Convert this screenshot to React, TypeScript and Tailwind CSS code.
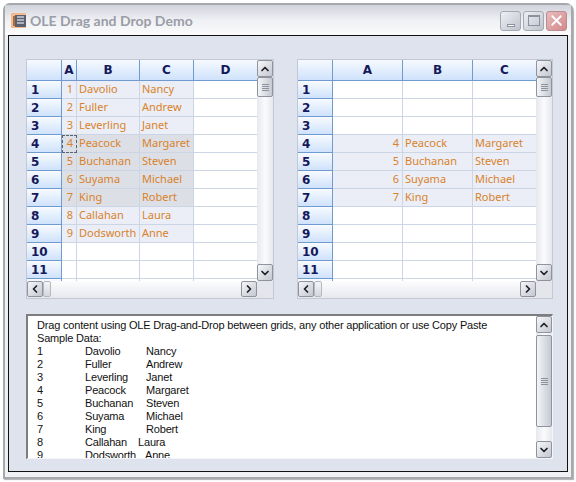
import { ChevronDown, ChevronLeft, ChevronRight, ChevronUp, X } from 'lucide-react'
import type { ReactNode } from 'react'

type Cell = { text?: string; right?: boolean; tone?: 'light' | 'dark'; focus?: boolean }

const people = [
  ['Davolio', 'Nancy'],
  ['Fuller', 'Andrew'],
  ['Leverling', 'Janet'],
  ['Peacock', 'Margaret'],
  ['Buchanan', 'Steven'],
  ['Suyama', 'Michael'],
  ['King', 'Robert'],
  ['Callahan', 'Laura'],
  ['Dodsworth', 'Anne'],
]

// x of the third text column differs on the two rows where the text is not tab aligned
const textWidths = [61, 61, 61, 61, 61, 61, 61, 53, 60]

function ScrollButton({ children, className = '' }: { children: ReactNode; className?: string }) {
  return (
    <div
      className={`flex shrink-0 items-center justify-center rounded-[2px] border border-[#8e939e] bg-gradient-to-br from-[#f6f7f9] to-[#c4c7d0] text-[#1f2128] ${className}`}
    >
      {children}
    </div>
  )
}

function GripLines() {
  return (
    <div className="flex flex-col gap-[1px]">
      <div className="h-px w-[7px] bg-[#8c919c]" />
      <div className="h-px w-[7px] bg-[#8c919c]" />
      <div className="h-px w-[7px] bg-[#8c919c]" />
      <div className="h-px w-[7px] bg-[#8c919c]" />
    </div>
  )
}

function VerticalBar() {
  return (
    <div className="flex h-full w-4 shrink-0 flex-col bg-gradient-to-r from-[#e6e8ee] via-[#fbfbfd] to-[#e6e8ee]">
      <ScrollButton className="h-[17px] w-4">
        <ChevronUp size={12} strokeWidth={3.5} />
      </ScrollButton>
      <div className="flex h-[20px] w-4 items-center justify-center rounded-[2px] border border-[#8e939e] bg-gradient-to-r from-[#f4f5f8] to-[#c6c9d2]">
        <GripLines />
      </div>
      <div className="grow" />
      <ScrollButton className="h-[17px] w-4">
        <ChevronDown size={12} strokeWidth={3.5} />
      </ScrollButton>
    </div>
  )
}

function HorizontalBar({ width }: { width: number }) {
  return (
    <div className="flex h-[17px] bg-gradient-to-b from-[#fdfdfe] to-[#e6e8ee]">
      <div className="flex" style={{ width }}>
        <ScrollButton className="h-[16px] w-4">
          <ChevronLeft size={12} strokeWidth={3.5} />
        </ScrollButton>
        <div className="h-[16px] w-[8px] rounded-[2px] border border-[#b4b8c2] bg-gradient-to-b from-[#f4f5f8] to-[#d4d7de]" />
        <div className="grow" />
        <ScrollButton className="h-[16px] w-4">
          <ChevronRight size={12} strokeWidth={3.5} />
        </ScrollButton>
      </div>
      <div className="grow bg-[#e4e6ec]" />
    </div>
  )
}

function DataGrid({ cols, rows, width }: { cols: { name: string; w: number }[]; rows: Cell[][]; width: number }) {
  const tableWidth = 35 + cols.reduce((sum, c) => sum + c.w, 0)
  return (
    <div className="flex h-[240px] flex-col border border-[#c4c8d2] bg-white" style={{ width }}>
      <div className="flex h-[221px]">
        <div className="h-full overflow-hidden" style={{ width: tableWidth }}>
          <div className="flex h-[21px] border-b border-[#6f9bd1]">
            <div className="w-[35px] border-r border-[#6f9bd1] bg-gradient-to-b from-[#f6faff] to-[#cfe2fb]" />
            {cols.map((c) => (
              <div
                key={c.name}
                className="flex items-center justify-center border-r border-[#6f9bd1] bg-gradient-to-b from-[#f6faff] to-[#cfe2fb] text-[12px] font-bold text-[#15185a] font-['DejaVu_Sans',sans-serif] last:border-r-0"
                style={{ width: c.w }}
              >
                {c.name}
              </div>
            ))}
          </div>
          {rows.map((row, i) => (
            <div key={i} className="flex h-[18px]">
              <div className="flex w-[35px] items-center border-r border-b border-[#6f9bd1] bg-gradient-to-b from-[#f8fbff] to-[#cfe2fb] pl-[4px] text-[12px] font-bold text-[#15185a] font-['DejaVu_Sans',sans-serif]">
                {i < 11 ? i + 1 : ''}
              </div>
              {row.map((cell, j) => (
                <div
                  key={j}
                  className={`flex items-center overflow-hidden whitespace-nowrap border-r border-b border-[#ccd5e4] text-[11px] text-[#d9822b] font-['Noto_Sans',sans-serif] last:border-r-0 ${
                    cell.tone === 'dark' ? 'bg-[#dcdfe6]' : cell.tone === 'light' ? 'bg-[#ebeef6]' : 'bg-white'
                  } ${cell.right ? 'justify-end pr-[3px]' : 'pl-[2px]'} ${
                    cell.focus ? 'outline-1 -outline-offset-1 outline-dashed outline-[#5b6270]' : ''
                  }`}
                  style={{ width: cols[j].w }}
                >
                  {cell.text}
                </div>
              ))}
            </div>
          ))}
        </div>
        <VerticalBar />
      </div>
      <HorizontalBar width={tableWidth} />
    </div>
  )
}

function WindowButton({ children, className }: { children: ReactNode; className: string }) {
  return (
    <div className={`flex h-[20px] w-[21px] items-center justify-center rounded-[3px] border ${className}`}>{children}</div>
  )
}

function TitleIcon() {
  return (
    <svg width="15" height="15" viewBox="0 0 15 15" className="shrink-0">
      <rect width="15" height="15" fill="#f6b98a" />
      <rect x="4" y="2" width="11" height="12" fill="#5a6170" />
      <path d="M6 4h7M6 7h7M6 10h7" stroke="#c9cdd6" strokeWidth="1.4" />
      <rect x="2" y="3" width="2" height="10" fill="#a8703f" />
    </svg>
  )
}

export default function App() {
  const leftRows: Cell[][] = Array.from({ length: 12 }, (_, i) => {
    const p = people[i]
    if (!p) return [{}, {}, {}, {}]
    const tone = i >= 3 && i <= 6 ? 'dark' : 'light'
    return [
      { text: String(i + 1), right: true, tone, focus: i === 3 },
      { text: p[0], tone },
      { text: p[1], tone },
      {},
    ]
  })
  const rightRows: Cell[][] = Array.from({ length: 12 }, (_, i) => {
    if (i < 3 || i > 6) return [{}, {}, {}]
    return [
      { text: String(i + 1), right: true, tone: 'light' },
      { text: people[i][0], tone: 'light' },
      { text: people[i][1], tone: 'light' },
    ]
  })

  return (
    <div className="h-[482px] w-[576px] bg-white pt-[3px] pl-[3px]">
      <div className="flex h-[476px] w-[570px] flex-col rounded-t-[7px] border-2 border-[#a6a8ad] bg-[#eef0f4] shadow-[1px_1px_1px_#b0b0b0]">
        <div className="flex h-[30px] items-center bg-gradient-to-b from-[#d0d3da] via-[#eff0f4] to-[#fbfbfc] pl-[6px] pr-[4px] pt-[1px]">
          <TitleIcon />
          <div className="ml-[4px] grow text-[14px] font-bold text-[#999da7] font-['Lato',sans-serif]">
            OLE Drag and Drop Demo
          </div>
          <div className="flex gap-[2px]">
            <WindowButton className="items-end border-[#a5a9b4] bg-gradient-to-br from-[#eef0f4] to-[#bfc3cd] pb-[3px]">
              <div className="h-[3px] w-[8px] border border-[#8c919c] bg-white" />
            </WindowButton>
            <WindowButton className="border-[#a5a9b4] bg-gradient-to-br from-[#eef0f4] to-[#bfc3cd]">
              <div className="h-[11px] w-[12px] border border-t-2 border-[#8c919c]" />
            </WindowButton>
            <WindowButton className="border-[#b78c92] bg-gradient-to-br from-[#e8bcbc] to-[#d38a8c] text-white">
              <X size={17} strokeWidth={2.5} />
            </WindowButton>
          </div>
        </div>
        <div className="mx-[3px] h-[437px] border border-[#111] bg-[#dfe3ee] pt-[23px] pl-[17px]">
          <div className="flex gap-[23px]">
            <DataGrid
              width={248}
              cols={[
                { name: 'A', w: 15 },
                { name: 'B', w: 63 },
                { name: 'C', w: 54 },
                { name: 'D', w: 63 },
              ]}
              rows={leftRows}
            />
            <DataGrid
              width={256}
              cols={[
                { name: 'A', w: 70 },
                { name: 'B', w: 70 },
                { name: 'C', w: 63 },
              ]}
              rows={rightRows}
            />
          </div>
          <div className="mt-[15px] flex h-[145px] w-[527px] border-t-2 border-l-2 border-b border-r border-t-[#7d7d7d] border-l-[#7d7d7d] border-b-[#f4f5f8] border-r-[#f4f5f8] bg-white">
            <div className="h-full grow overflow-hidden pl-[9px] pt-[3px] text-[11px] leading-[13px] tracking-[-0.18px] text-[#111] font-['Liberation_Sans',sans-serif]">
              <div className="whitespace-nowrap">Drag content using OLE Drag-and-Drop between grids, any other application or use Copy Paste</div>
              <div>Sample Data:</div>
              {people.map((p, i) => (
                <div key={p[0]} className="flex h-[13px] whitespace-nowrap">
                  <div className="w-[48px]">{i + 1}</div>
                  <div style={{ width: textWidths[i] }}>{p[0]}</div>
                  <div>{p[1]}</div>
                </div>
              ))}
            </div>
            <VerticalTextBar />
          </div>
        </div>
      </div>
    </div>
  )
}

function VerticalTextBar() {
  return (
    <div className="flex h-full w-4 shrink-0 flex-col bg-gradient-to-r from-[#e6e8ee] via-[#fbfbfd] to-[#e6e8ee]">
      <ScrollButton className="h-[17px] w-4">
        <ChevronUp size={12} strokeWidth={3.5} />
      </ScrollButton>
      <div className="mt-[2px] flex h-[92px] w-4 items-center justify-center rounded-[2px] border border-[#8e939e] bg-gradient-to-r from-[#f4f5f8] to-[#c6c9d2]">
        <GripLines />
      </div>
      <div className="grow" />
      <ScrollButton className="h-[17px] w-4">
        <ChevronDown size={12} strokeWidth={3.5} />
      </ScrollButton>
    </div>
  )
}
